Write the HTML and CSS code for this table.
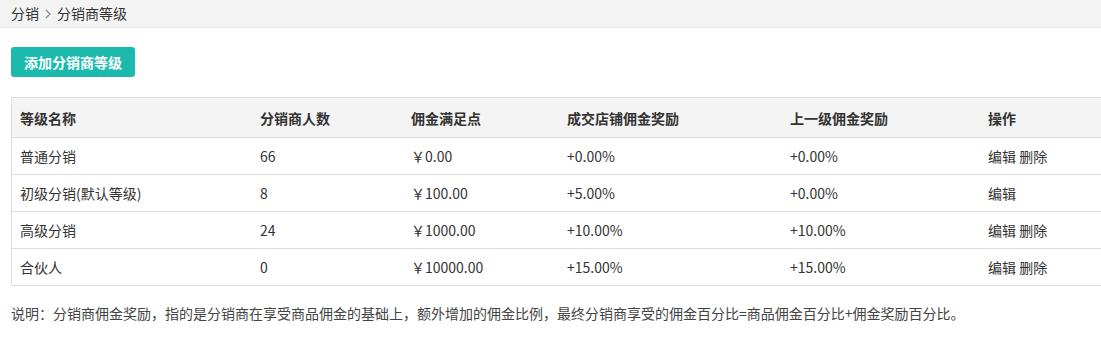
FILE: index.html
```html
<!DOCTYPE html>
<html lang="zh-CN">
<head>
<meta charset="utf-8">
<title>分销商等级</title>
<link rel="stylesheet" href="styles.css">
</head>
<body>
<div class="crumb">
  <span>分销</span>
  <svg class="chev" width="6" height="10" viewBox="0 0 6 10"><path d="M1 1 L5 5 L1 9" fill="none" stroke="#8a8a8a" stroke-width="1.1"/></svg>
  <span>分销商等级</span>
</div>
<main class="content">
  <button class="btn-add" type="button">添加分销商等级</button>
  <table class="grid">
    <colgroup>
      <col class="c1"><col class="c2"><col class="c3"><col class="c4"><col class="c5"><col class="c6">
    </colgroup>
    <thead>
      <tr><th>等级名称</th><th>分销商人数</th><th>佣金满足点</th><th>成交店铺佣金奖励</th><th>上一级佣金奖励</th><th>操作</th></tr>
    </thead>
    <tbody>
      <tr><td>普通分销</td><td>66</td><td>￥0.00</td><td>+0.00%</td><td>+0.00%</td><td><a>编辑</a> <a>删除</a></td></tr>
      <tr><td>初级分销(默认等级)</td><td>8</td><td>￥100.00</td><td>+5.00%</td><td>+0.00%</td><td><a>编辑</a></td></tr>
      <tr><td>高级分销</td><td>24</td><td>￥1000.00</td><td>+10.00%</td><td>+10.00%</td><td><a>编辑</a> <a>删除</a></td></tr>
      <tr><td>合伙人</td><td>0</td><td>￥10000.00</td><td>+15.00%</td><td>+15.00%</td><td><a>编辑</a> <a>删除</a></td></tr>
    </tbody>
  </table>
  <p class="note">说明：分销商佣金奖励，指的是分销商在享受商品佣金的基础上，额外增加的佣金比例，最终分销商享受的佣金百分比=商品佣金百分比+佣金奖励百分比。</p>
</main>
</body>
</html>
```
FILE: styles.css
```css
html, body {
  margin: 0;
  padding: 0;
  background: #fff;
  overflow: hidden;
}
body {
  font-family: "Noto Sans CJK SC", "Noto Sans", sans-serif;
  font-size: 14px;
  color: #333;
}
.crumb {
  height: 27px;
  line-height: 27px;
  background: #f3f3f3;
  border-bottom: 1px solid #e6e6e6;
  padding-left: 11px;
  display: flex;
  align-items: center;
  gap: 6px;
  color: #333;
}
.chev {
  display: block;
}
.content {
  padding: 19px 0 0 11px;
}
.btn-add {
  display: block;
  height: 30px;
  padding: 0 13px;
  border: 0;
  border-radius: 3px;
  background: #1bbaac;
  color: #fff;
  font-family: inherit;
  font-size: 14px;
  font-weight: bold;
  line-height: 30px;
}
.grid {
  margin-top: 20px;
  width: 1090px;
  table-layout: fixed;
  border-collapse: separate;
  border-spacing: 0;
  border-top: 1px solid #dddddd;
  border-left: 1px solid #dddddd;
}
.c1 { width: 240px; }
.c2 { width: 151px; }
.c3 { width: 156px; }
.c4 { width: 223px; }
.c5 { width: 198px; }
.c6 { width: 121px; }
.grid th,
.grid td {
  text-align: left;
  padding: 0 0 0 8px;
  border-bottom: 1px solid #dddddd;
  white-space: nowrap;
}
.grid th {
  height: 39px;
  background: #f4f4f4;
  font-weight: bold;
  color: #333;
}
.grid td {
  height: 36px;
}
.grid a {
  color: #333;
  cursor: pointer;
}
.note {
  margin: 17px 0 0;
  line-height: 20px;
  color: #444;
}
```
